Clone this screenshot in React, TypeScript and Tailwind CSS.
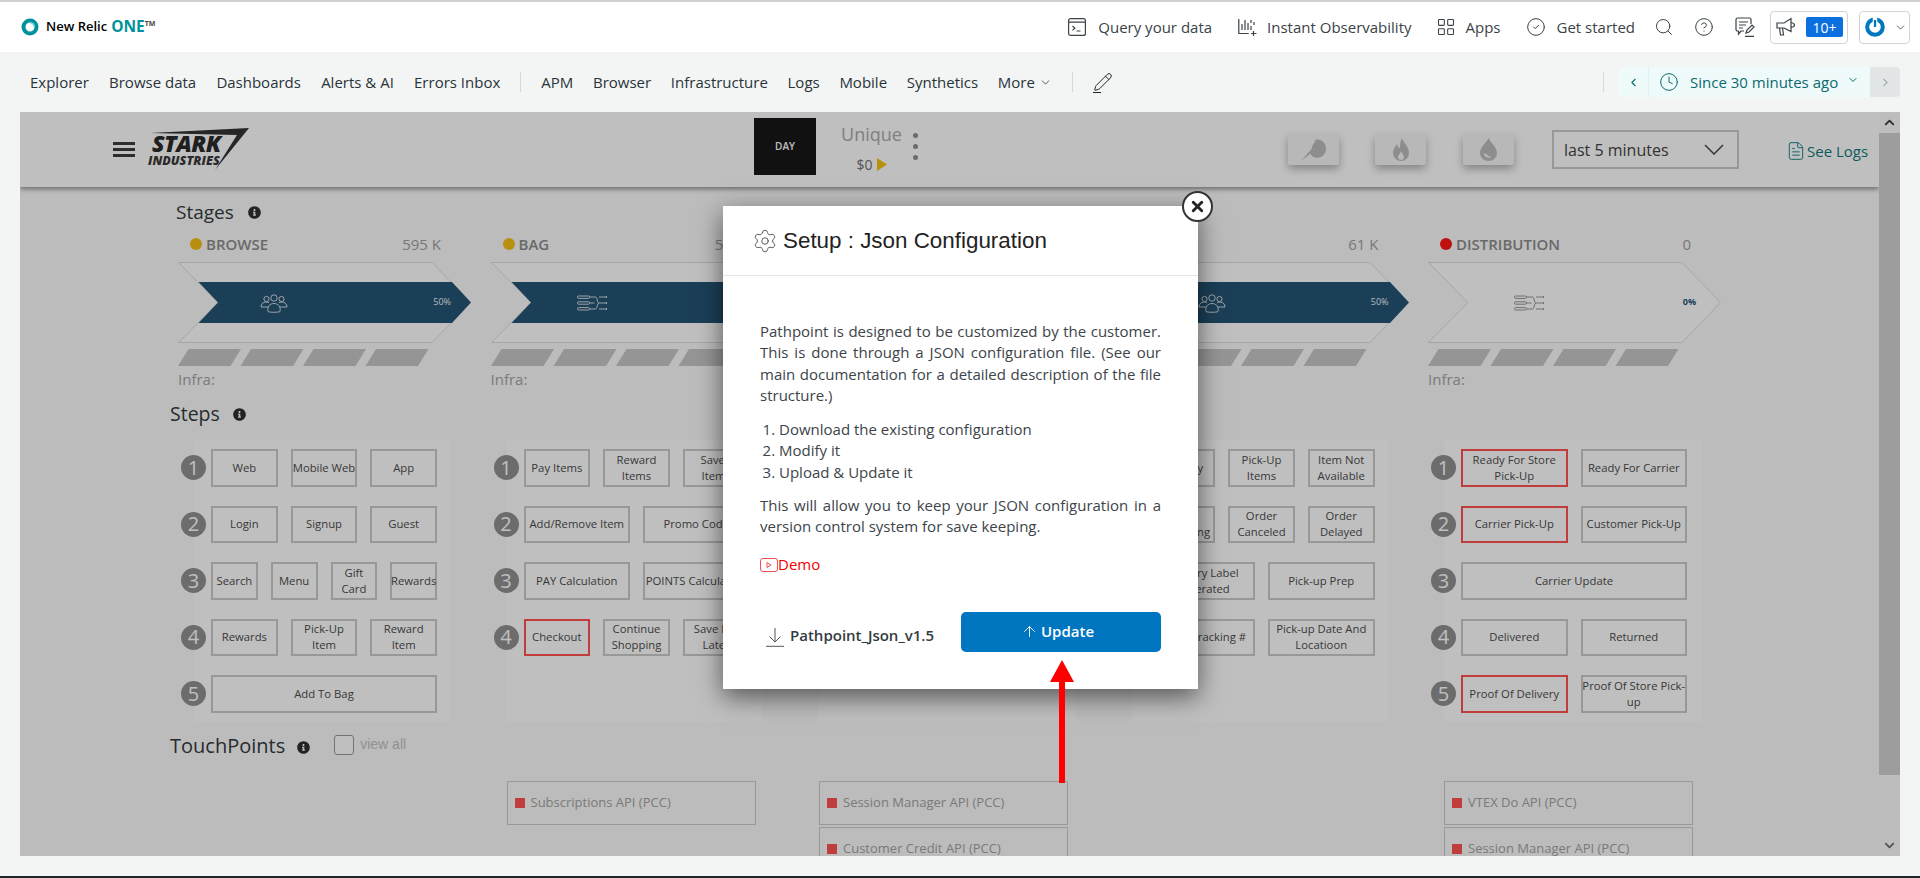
import { ArrowUp, ChevronDown, ChevronLeft, ChevronRight, ChevronUp, CircleCheck, CircleHelp, Clock, FileText, LayoutGrid, Pencil, Search, Settings, X } from 'lucide-react'
import { FaInfoCircle } from 'react-icons/fa'

const navLeft = ['Explorer', 'Browse data', 'Dashboards', 'Alerts & AI', 'Errors Inbox']
const navRight = ['APM', 'Browser', 'Infrastructure', 'Logs', 'Mobile', 'Synthetics']

// the third stage sits fully behind the modal, so it has no text of its own
const stages = [
  { name: 'BROWSE', value: '595 K', dot: 'bg-[#f5c015]', band: true, flow: false, infra: true },
  { name: 'BAG', value: '595 K', dot: 'bg-[#f5c015]', band: true, flow: true, infra: true },
  { name: '', value: '', dot: 'bg-[#f5c015]', band: true, flow: true, infra: false },
  { name: 'PICK', value: '61 K', dot: 'bg-[#f5c015]', band: true, flow: false, infra: false },
  { name: 'DISTRIBUTION', value: '0', dot: 'bg-[#ff1414]', band: false, flow: true, infra: true },
]

type Step = { label: string; red?: boolean }

const steps: Step[][][] = [
  [
    [{ label: 'Web' }, { label: 'Mobile Web' }, { label: 'App' }],
    [{ label: 'Login' }, { label: 'Signup' }, { label: 'Guest' }],
    [{ label: 'Search' }, { label: 'Menu' }, { label: 'Gift Card' }, { label: 'Rewards' }],
    [{ label: 'Rewards' }, { label: 'Pick-Up Item' }, { label: 'Reward Item' }],
    [{ label: 'Add To Bag' }],
  ],
  [
    [{ label: 'Pay Items' }, { label: 'Reward Items' }, { label: 'Saved\nItems' }],
    [{ label: 'Add/Remove Item' }, { label: 'Promo Code' }],
    [{ label: 'PAY Calculation' }, { label: 'POINTS Calculation' }],
    [{ label: 'Checkout', red: true }, { label: 'Continue Shopping' }, { label: 'Save For Later' }],
  ],
  [],
  [
    [{ label: 'Delivery' }, { label: 'Pick-Up Items' }, { label: 'Item Not Available' }],
    [{ label: 'Order Processing' }, { label: 'Order Canceled' }, { label: 'Order Delayed' }],
    [{ label: 'Delivery Label Generated' }, { label: 'Pick-up Prep' }],
    [{ label: 'Order Tracking #' }, { label: 'Pick-up Date And Locatioon' }],
  ],
  [
    [{ label: 'Ready For Store Pick-Up', red: true }, { label: 'Ready For Carrier' }],
    [{ label: 'Carrier Pick-Up', red: true }, { label: 'Customer Pick-Up' }],
    [{ label: 'Carrier Update' }],
    [{ label: 'Delivered' }, { label: 'Returned' }],
    [{ label: 'Proof Of Delivery', red: true }, { label: 'Proof Of Store Pick-\nup' }],
  ],
]

const touchpoints = [
  [],
  ['Subscriptions API (PCC)'],
  ['Session Manager API (PCC)', 'Customer Credit API (PCC)'],
  [],
  ['VTEX Do API (PCC)', 'Session Manager API (PCC)'],
]

function UsersIcon({ color }: { color: string }) {
  return (
    <svg width="28" height="20" viewBox="0 0 28 20" fill="none" stroke={color} strokeWidth="0.9">
      <circle cx="14" cy="5" r="3.2" />
      <circle cx="6.5" cy="6" r="2.6" />
      <circle cx="21.5" cy="6" r="2.6" />
      <path d="M8 18.500c-1-5 2-8 6-8s7 3 6 8c-1 1-11 1-12 0z" />
      <path d="M8.500 14H1c0-3 2-5 5.500-5 1 0 2 .3 2.500.8M19.500 14H27c0-3-2-5-5.500-5-1 0-2 .3-2.500.8" />
    </svg>
  )
}

function FlowIcon({ color }: { color: string }) {
  return (
    <svg width="30" height="16" viewBox="0 0 30 16" fill="none" stroke={color} strokeWidth="0.9">
      <rect x="0.500" y="1" width="12" height="2.400" rx="1" />
      <rect x="0.500" y="6.800" width="12" height="2.400" rx="1" />
      <rect x="0.500" y="12.600" width="12" height="2.400" rx="1" />
      <path d="M12.500 2h6c2 0 1.500 6 3.500 6h7.500M12.500 8h5M12.500 14h6c2 0 1.500-6 3.500-6M22 2h7.500M22 14h7.500" />
      <path d="M29.500 1v2M29.500 7v2M29.500 13v2" />
    </svg>
  )
}

function StageChevron({ band, flow }: { band: boolean; flow: boolean }) {
  const iconColor = band ? '#e4e9ec' : '#8a8a8a'
  return (
    <div className="relative h-[81px] w-[293px]">
      <svg width="293" height="81" viewBox="0 0 293 81" className="block">
        <polygon points="0.500,0.500 254,0.500 292.500,40.500 254,80.500 0.500,80.500 40,40.500" fill="#ffffff" stroke="#dedede" />
        {band && <polygon points="20.500,20 274,20 293,40.500 274,61 20.500,61 40,40.500" fill="#255474" />}
      </svg>
      {flow ? (
        <div className="absolute left-[86px] top-[33px]">
          <FlowIcon color={iconColor} />
        </div>
      ) : (
        <div className="absolute left-[82px] top-[31px]">
          <UsersIcon color={iconColor} />
        </div>
      )}
      <span className={`absolute top-[34px] text-[9px] leading-[12px] ${band ? 'right-[20px] text-[#eef2f4]' : 'right-[25px] font-bold text-[#255474]'}`}>
        {band ? '50%' : '0%'}
      </span>
    </div>
  )
}

function InfraBars() {
  return (
    <svg width="250" height="17" viewBox="0 0 250 17" className="block">
      {[0, 62.5, 125, 187.5].map((x) => (
        <polygon key={x} points={`${x},17 ${x + 10.5},0 ${x + 63},0 ${x + 52.5},17`} fill="#c7c7c7" />
      ))}
    </svg>
  )
}

function StepBox({ step }: { step: Step }) {
  return (
    <div className={`flex min-w-0 flex-1 basis-0 items-center justify-center border-2 text-center text-[11.300px] leading-[16px] text-[#4c4c4c] ${step.label.includes('\n') ? 'whitespace-pre' : ''} ${step.red ? 'border-[#ff5252]' : 'border-[#cbcbcb]'}`}>
      {step.label}
    </div>
  )
}

function StepPanel({ rows }: { rows: Step[][] }) {
  return (
    <div className="flex h-[282px] w-[256.500px] flex-col gap-[19px] bg-white pl-[17px] pt-[9px]">
      {rows.map((row, i) => (
        <div key={i} className="relative flex h-[37.500px] w-[226px] gap-[13px]">
          <div className="absolute left-[-30px] top-[6px] flex h-[25px] w-[25px] items-center justify-center rounded-full bg-[#919191] text-[20px] leading-none text-white">
            {i + 1}
          </div>
          {row.map((step) => (
            <StepBox key={step.label} step={step} />
          ))}
        </div>
      ))}
    </div>
  )
}

function StarkLogo() {
  return (
    <div className="relative mt-[16px] ml-[13px] h-[42px] w-[102px]">
      <svg width="102" height="42" viewBox="0 0 102 42" className="absolute left-0 top-0">
        <polygon points="2,5 101,0 67,42 89,7" fill="#333333" />
      </svg>
      <div className="pl-[4px] pt-[5px] text-[23px] font-extrabold italic leading-[21px] tracking-[-0.5px] text-[#2a2a2a]">STARK</div>
      <div className="text-[12.500px] font-extrabold italic leading-[13px] text-[#3a3a3a]">INDUSTRIES</div>
    </div>
  )
}

function HeaderTile({ children }: { children: React.ReactNode }) {
  return (
    <div className="mt-[22px] flex h-[31px] w-[51px] items-center justify-center rounded-[2px] bg-[#f6f6f6] shadow-[0_4px_8px_rgba(0,0,0,0.3)]">
      {children}
    </div>
  )
}

function Info({ className }: { className: string }) {
  return <FaInfoCircle size={13} className={`text-[#2f2f2f] ${className}`} />
}

export default function App() {
  return (
    <div className="relative flex h-[878px] w-[1920px] flex-col overflow-hidden bg-[#f3f5f5] font-['Open_Sans',sans-serif] text-[15px] text-[#293338]">
      {/* top bar */}
      <header className="flex h-[52px] shrink-0 items-center border-t-2 border-[#d0d0d0] bg-white pl-[20px] text-[#3a4347]">
        <svg width="18" height="18" viewBox="0 0 18 18" className="ml-[1px]">
          <circle cx="9" cy="9" r="6.500" fill="none" stroke="#00929c" strokeWidth="4" />
          <path d="M9 4.600a4.400 4.400 0 0 1 4.400 4.400" fill="none" stroke="#6fd0d4" strokeWidth="1.600" />
        </svg>
        <span className="ml-[7px] text-[13px] font-semibold text-black">New Relic</span>
        <span className="ml-[4px] text-[15.500px] font-bold text-[#00929c]">ONE</span>
        <span className="mb-[6px] text-[7px] font-bold text-[#444]">TM</span>

        <div className="ml-auto flex items-center">
          <svg width="18" height="18" viewBox="0 0 18 18" fill="none" stroke="#3a4347" strokeWidth="1.200">
            <rect x="0.600" y="0.600" width="16.800" height="16.800" rx="2" />
            <path d="M0.600 4.200h16.800M4.500 8l2.400 2.200-2.400 2.200M8.500 13h4" />
          </svg>
          <span className="ml-[12px]">Query your data</span>
          <svg width="19" height="18" viewBox="0 0 19 18" fill="none" stroke="#3a4347" strokeWidth="1.200" className="ml-[26px]">
            <path d="M0.800 1v14.500h10M4 6v6M7 2v10M10 5v7M13 2v3M13 8v4M15.500 13v5M13 15.500h5.500M16 4v3" />
          </svg>
          <span className="ml-[10px]">Instant Observability</span>
          <LayoutGrid size={20} strokeWidth={1.300} className="ml-[24px]" />
          <span className="ml-[10px]">Apps</span>
          <CircleCheck size={20} strokeWidth={1.200} className="ml-[25px]" />
          <span className="ml-[11px]">Get started</span>
          <Search size={20} strokeWidth={1.200} className="ml-[19px]" />
          <CircleHelp size={20} strokeWidth={1.200} className="ml-[20px]" />
          <svg width="20" height="20" viewBox="0 0 20 20" fill="none" stroke="#3a4347" strokeWidth="1.200" className="ml-[21px]">
            <path d="M9 14H6l-2.500 3v-3H2.500A1.500 1.500 0 0 1 1 12.500V2.500A1.500 1.500 0 0 1 2.500 1h12A1.500 1.500 0 0 1 16 2.500V7" />
            <path d="M4 5h9M4 8h7M4 11h4M11 16l1-3 5-5 2 2-5 5zM10 19.300h9" />
          </svg>
          <div className="ml-[15px] flex h-[33px] w-[78px] items-center rounded-[4px] border border-[#d3d3d3] pl-[5px]">
            <svg width="20" height="20" viewBox="0 0 20 20" fill="none" stroke="#3a4347" strokeWidth="1.200">
              <path d="M1 6h7l7-4.500v13L8 11H1zM3.500 11l1 7h3l-1-7M15 5.500c2.500.5 3.500 1.500 3.500 2.500s-1 2-3.500 2.500" />
            </svg>
            <span className="ml-[10px] flex h-[20px] w-[37px] items-center justify-center rounded-[2px] bg-[#0b6fde] text-[14px] text-white">10+</span>
          </div>
          <div className="ml-[11px] mr-[10px] flex h-[33px] w-[51px] items-center rounded-[4px] border border-[#d3d3d3] pl-[5px]">
            <svg width="20" height="20" viewBox="0 0 20 20" fill="none">
              <circle cx="10" cy="10" r="7.800" stroke="#0077bf" strokeWidth="4" />
              <path d="M10 0v10" stroke="#ffffff" strokeWidth="4.500" />
              <path d="M10 3v7" stroke="#0077bf" strokeWidth="2.200" />
            </svg>
            <ChevronDown size={13} strokeWidth={1.500} className="ml-[9px]" />
          </div>
        </div>
      </header>

      {/* nav bar */}
      <nav className="flex h-[60px] shrink-0 items-center pl-[30px] pr-[20px]">
        <div className="flex gap-[20.200px]">
          {navLeft.map((item) => (
            <span key={item}>{item}</span>
          ))}
        </div>
        <div className="mx-[20px] h-[20px] w-px bg-[#d5d9d9]" />
        <div className="flex gap-[19.700px]">
          {navRight.map((item) => (
            <span key={item}>{item}</span>
          ))}
          <span className="flex items-center gap-[4px]">
            More <ChevronDown size={13} strokeWidth={1.500} />
          </span>
        </div>
        <div className="mx-[20px] h-[20px] w-px bg-[#d5d9d9]" />
        <div className="flex flex-col items-center">
          <Pencil size={20} strokeWidth={1.200} className="text-[#1f282d]" />
          <div className="ml-[-12px] h-px w-[8px] bg-[#1f282d]" />
        </div>
        <div className="ml-auto h-[20px] w-px bg-[#d5d9d9]" />
        <div className="ml-[15px] flex h-[30px] w-[281px] overflow-hidden rounded-[4px] text-[#0c6a6e]">
          <div className="flex w-[30px] items-center justify-center border-r border-[#dff0ef] bg-[#effafa]">
            <ChevronLeft size={13} />
          </div>
          <div className="flex flex-1 items-center bg-[#effafa] pl-[10px]">
            <Clock size={20} strokeWidth={1.200} />
            <span className="ml-[11px]">Since 30 minutes ago</span>
            <ChevronDown size={12} className="ml-[9px] mb-[4px]" />
          </div>
          <div className="flex w-[30px] items-center justify-center bg-[#e3e6e6] text-[#a3abab]">
            <ChevronRight size={13} />
          </div>
        </div>
      </nav>

      {/* embedded app */}
      <main className="ml-[20px] flex h-[744px] w-[1880px] shrink-0">
        <div className="relative h-full w-[1859px] overflow-hidden bg-[#fbfbfb]">
          <div className="flex h-[75px] items-start bg-white shadow-[0_2px_5px_rgba(0,0,0,0.45)]">
            <div className="ml-[93px] mt-[30px] flex w-[22px] flex-col gap-[3px]">
              <div className="h-[3px] bg-[#3d3d3d]" />
              <div className="h-[3px] bg-[#3d3d3d]" />
              <div className="h-[3px] bg-[#3d3d3d]" />
            </div>
            <StarkLogo />
            <div className="ml-[504px] mt-[6px] flex h-[57px] w-[62px] items-center justify-center bg-[#171717] text-[10px] font-semibold text-white">
              DAY
            </div>
            <div className="ml-[26px] mt-[9px] flex w-[59px] flex-col items-center">
              <span className="text-[18px] leading-[26px] text-[#aaaaaa]">Unique</span>
              <span className="mt-[7px] flex items-center gap-[4px] text-[14px] text-[#707070]">
                $0
                <svg width="10" height="13" viewBox="0 0 10 13">
                  <polygon points="0,0 10,6.500 0,13" fill="#f5c015" />
                </svg>
              </span>
            </div>
            <div className="ml-[12px] mt-[21px] flex flex-col gap-[6px]">
              <div className="h-[5px] w-[5px] rounded-full bg-[#8f8f8f]" />
              <div className="h-[5px] w-[5px] rounded-full bg-[#8f8f8f]" />
              <div className="h-[5px] w-[5px] rounded-full bg-[#8f8f8f]" />
            </div>
            <div className="ml-[370px]">
              <HeaderTile>
                <svg width="25" height="22" viewBox="0 0 25 22" fill="#bdbdbd">
                  <path d="M0 22L10.500 10C11 6.500 12.500 4 14.500 2.800L13 1.800C15 .5 17.500 0 19.500 1C23 2.500 25 6 25 10C25 16 19 20 14 18.500C12 18 10.500 17 9.500 14.500Z" />
                </svg>
              </HeaderTile>
            </div>
            <div className="ml-[36px]">
              <HeaderTile>
                <svg width="16" height="23" viewBox="0 0 16 23" fill="#bdbdbd">
                  <path fillRule="evenodd" d="M9 0C10 5 16 8 16 15A8 8 0 0 1 0 15C0 11 2 9 4 6C4.500 9 5.500 10 6.500 10C7.500 7 7 3 9 0ZM8 13C7 16 5 17 5 19A3 3 0 0 0 11 19C11 17 9 16 8 13Z" />
                </svg>
              </HeaderTile>
            </div>
            <div className="ml-[37px]">
              <HeaderTile>
                <svg width="17" height="23" viewBox="0 0 17 23" fill="#bdbdbd">
                  <path d="M8.500 0C7 4 0 9 0 15a8.500 8 0 0 0 17 0C17 9 10 4 8.500 0zM3.500 15c2 .5 3 1 5 3 1 .8 2 1 3 1.200-3 1.500-7.500-.2-8-4.200z" fillRule="evenodd" />
                </svg>
              </HeaderTile>
            </div>
            <div className="ml-[38px] mt-[18px] flex h-[39px] w-[187px] items-center justify-between border-2 border-[#cbcbcb] pl-[10px] pr-[13px] text-[16px] text-[#444444]">
              last 5 minutes
              <svg width="20" height="11" viewBox="0 0 20 11" fill="none" stroke="#3f4a55" strokeWidth="1.500">
                <path d="M1 1l9 9 9-9" />
              </svg>
            </div>
            <div className="ml-[47px] mt-[28px] flex items-center gap-[1px] text-[#107b80]">
              <FileText size={20} strokeWidth={1.100} />
              See Logs
            </div>
          </div>

          {/* stages */}
          <div className="ml-[156px] mt-[13px] flex h-[24px] items-center text-[19px] text-[#333b40]">
            Stages <Info className="ml-[14px]" />
          </div>
          <div className="ml-[158px] mt-[10px] flex gap-[19.500px]">
            {stages.map((stage, i) => (
              <div key={i} className="w-[293px]">
                <div className="flex h-[20px] w-[263px] items-center pl-[12px]">
                  <div className={`h-[12px] w-[12px] rounded-full ${stage.dot}`} />
                  <span className="ml-[4px] font-semibold text-[#8c8c8c]">{stage.name}</span>
                  <span className="ml-auto text-[#a0a0a0]">{stage.value}</span>
                </div>
                <div className="mt-[8px]">
                  <StageChevron band={stage.band} flow={stage.flow} />
                </div>
                <div className="mt-[6px]">
                  <InfraBars />
                </div>
                <div className="mt-[2px] mb-[1px] h-[20px] text-[#a5a5a5]">{stage.infra && 'Infra:'}</div>
              </div>
            ))}
          </div>

          {/* steps */}
          <div className="ml-[150px] mt-[15px] flex h-[20px] items-center text-[19.500px] text-[#333b40]">
            Steps <Info className="ml-[13px]" />
          </div>
          <div className="ml-[174px] mt-[16px] flex gap-[56px]">
            {steps.map((rows, i) => (
              <StepPanel key={i} rows={rows} />
            ))}
          </div>

          {/* touchpoints */}
          <div className="ml-[150px] mt-[12px] flex h-[24px] items-center text-[20px] text-[#333b40]">
            TouchPoints <Info className="ml-[12px] mt-[3px]" />
            <div className="ml-[24px] mt-[-3px] h-[20px] w-[20px] rounded-[3px] border border-[#999999] bg-white" />
            <span className="ml-[6px] mt-[-3px] font-['Liberation_Sans',sans-serif] text-[14px] text-[#c2c2c2]">view all</span>
          </div>
          <div className="ml-[174px] mt-[23px] flex gap-[56px]">
            {touchpoints.map((cards, i) => (
              <div key={i} className="flex w-[256.500px] flex-col gap-[2px]">
                {cards.map((card) => (
                  <div key={card} className="flex h-[44px] w-[249px] shrink-0 items-center border border-[#cccccc] pl-[7px] text-[13px] text-[#a3a3a3]">
                    <div className="mr-[6px] h-[10px] w-[10px] bg-[#ff5252]" />
                    {card}
                  </div>
                ))}
              </div>
            ))}
          </div>

          {/* modal backdrop */}
          <div className="absolute inset-0 bg-black/25" />
        </div>

        {/* scrollbar */}
        <div className="flex w-[21px] flex-col bg-[#bdbdbd]">
          <div className="flex h-[21px] items-center justify-center text-[#2e2e2e]">
            <ChevronUp size={15} strokeWidth={3} />
          </div>
          <div className="h-[642px] bg-[#9d9d9d]" />
          <div className="mt-auto flex h-[21px] items-center justify-center text-[#555555]">
            <ChevronDown size={15} strokeWidth={3} />
          </div>
        </div>
      </main>
      <div className="mt-auto h-[2px] bg-[#1d262b]" />

      {/* modal */}
      <div className="absolute left-[723px] top-[206px] h-[483px] w-[475px] bg-white shadow-[0_8px_24px_rgba(0,0,0,0.55)]">
        <button className="absolute right-[-15px] top-[-15px] flex h-[31px] w-[31px] items-center justify-center rounded-full border-2 border-[#333333] bg-white">
          <X size={17} strokeWidth={4} className="text-[#222222]" />
        </button>
        <div className="flex h-[70px] items-center border-b border-[#e5e5e5] pl-[29px]">
          <Settings size={26} strokeWidth={0.800} className="text-[#444444]" />
          <h2 className="ml-[5px] font-['Liberation_Sans',sans-serif] text-[22.400px] text-[#222222]">Setup : Json Configuration</h2>
        </div>
        <div className="px-[37px] leading-[21.300px] text-[#3c4449]">
          <p className="mt-[45px] text-justify">
            Pathpoint is designed to be customized by the customer. This is done through a JSON configuration file. (See our main documentation for a detailed description of the file structure.)
          </p>
          <ol className="mt-[13px] list-decimal pl-[19px]">
            <li>Download the existing configuration</li>
            <li>Modify it</li>
            <li>Upload &amp; Update it</li>
          </ol>
          <p className="mt-[12px] text-justify">
            This will allow you to keep your JSON configuration in a version control system for save keeping.
          </p>
          <div className="mt-[16px] flex h-[22px] items-center text-[#f00000]">
            <svg width="18" height="14" viewBox="0 0 18 14" fill="none" stroke="#f05050" strokeWidth="1">
              <rect x="0.500" y="0.500" width="17" height="13" rx="2.500" />
              <path d="M7 4.500l4 2.500-4 2.500z" />
            </svg>
            Demo
          </div>
          <div className="mt-[36px] flex items-start">
            <svg width="18" height="20" viewBox="0 0 18 20" fill="none" stroke="#555555" strokeWidth="1" className="ml-[6px] mt-[15px]">
              <path d="M9 1v14M3.500 9.500L9 15l5.500-5.500M0 19.300h18" />
            </svg>
            <span className="ml-[6px] mt-[13px] font-semibold text-[#333b40]">Pathpoint_Json_v1.5</span>
            <button className="ml-auto flex h-[40px] w-[200px] items-center justify-center gap-[3px] rounded-[5px] bg-[#0076c0] pr-[7px] font-semibold text-white">
              <ArrowUp size={17} strokeWidth={1.300} />
              Update
            </button>
          </div>
        </div>
      </div>

      {/* red annotation arrow */}
      <svg width="26" height="124" viewBox="0 0 26 124" className="absolute left-[1049px] top-[660px]">
        <polygon points="13,0 25,22 16,22 16,123 10,123 10,22 1,22" fill="#ff0000" />
      </svg>
    </div>
  )
}
